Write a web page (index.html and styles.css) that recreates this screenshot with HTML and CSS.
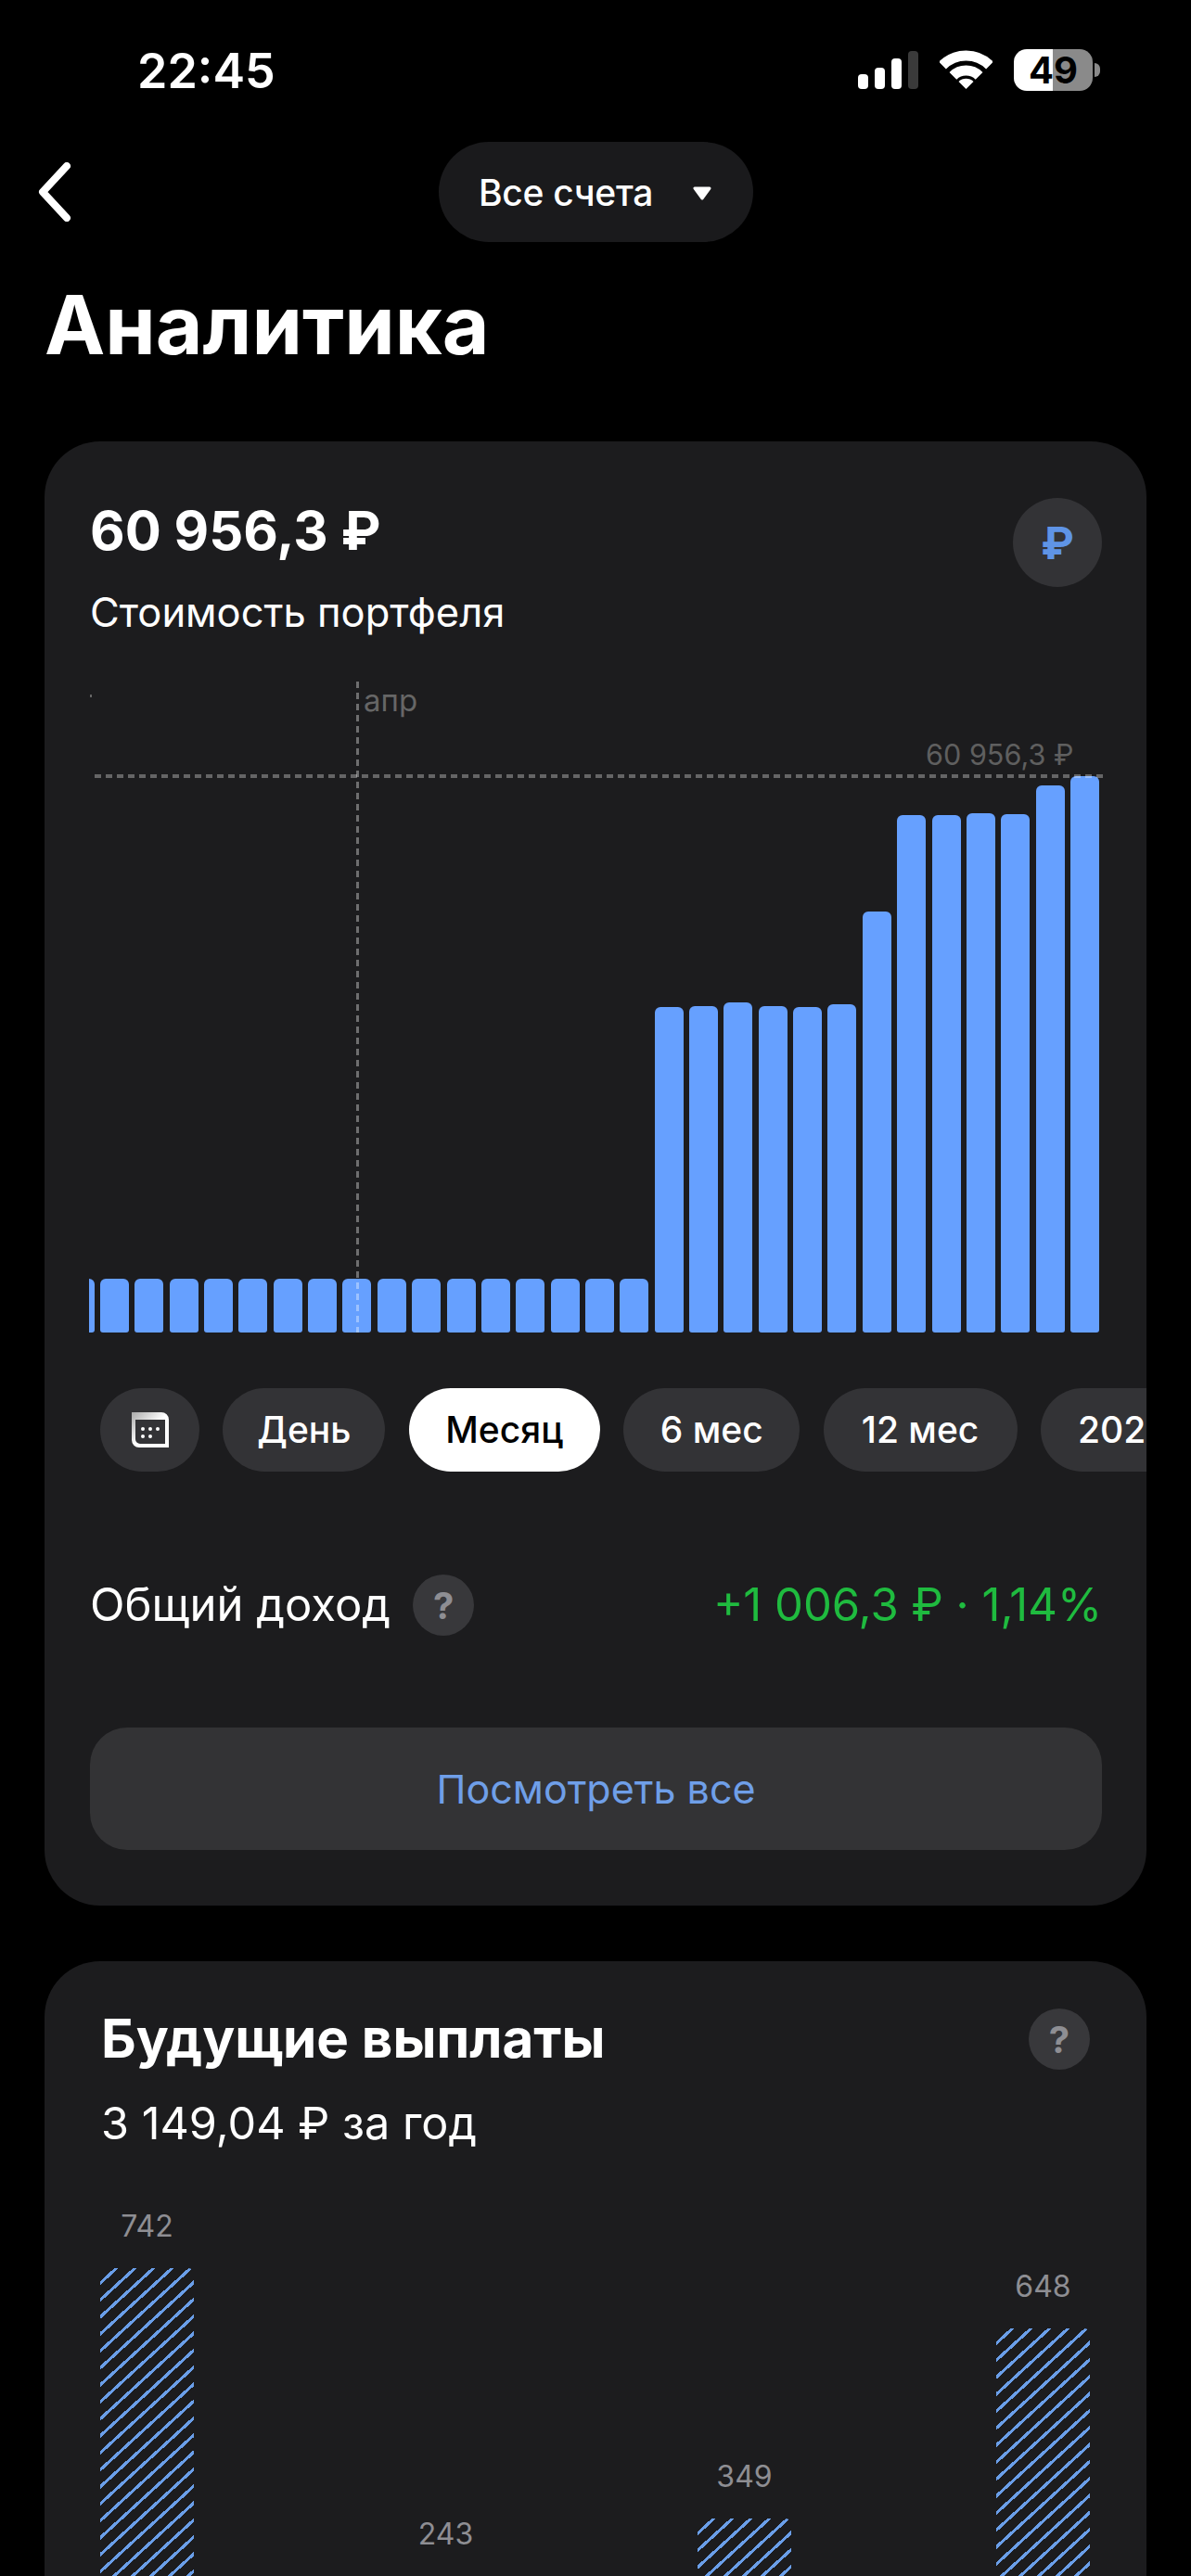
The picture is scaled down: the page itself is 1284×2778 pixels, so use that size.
FILE: index.html
```html
<!DOCTYPE html>
<html lang="ru">
<head>
<meta charset="utf-8">
<title>Аналитика</title>
<link rel="stylesheet" href="styles.css">
</head>
<body>
<div class="screen">
  <header class="status">
    <span class="time">22:45</span>
    <div class="status-icons">
      <div class="signal">
        <i class="sig s1"></i><i class="sig s2"></i><i class="sig s3"></i><i class="sig s4"></i>
      </div>
      <svg class="wifi" width="57" height="42" viewBox="0 0 57 42">
        <path d="M3 16.5A36 36 0 0 1 54 16.5" fill="none" stroke="#fff" stroke-width="11"/>
        <path d="M14.4 27.9A20 20 0 0 1 42.6 27.9" fill="none" stroke="#fff" stroke-width="11"/>
        <path d="M28.5 42L20.5 34A11.3 11.3 0 0 1 36.5 34Z" fill="#fff"/>
      </svg>
      <div class="battery">
        <div class="battery-body"><span class="battery-text">49</span></div>
        <i class="battery-nub"></i>
      </div>
    </div>
  </header>

  <nav class="nav">
    <svg class="back" width="38" height="64" viewBox="0 0 38 64">
      <path d="M32 4L6 32L32 60" fill="none" stroke="#fff" stroke-width="8" stroke-linecap="round" stroke-linejoin="round"/>
    </svg>
    <div class="account-pill">
      <span>Все счета</span>
      <svg width="20" height="15" viewBox="0 0 20 15"><path d="M2 2H18L10 13Z" fill="#fff" stroke="#fff" stroke-width="3" stroke-linejoin="round"/></svg>
    </div>
  </nav>

  <h1 class="title">Аналитика</h1>

  <section class="card card-portfolio">
    <div class="portfolio-head">
      <div>
        <div class="amount">60 956,3 ₽</div>
        <div class="amount-label">Стоимость портфеля</div>
      </div>
      <div class="currency">₽</div>
    </div>

    <div class="chart">
      <div class="bars" id="bars">
        <i class="bar" style="height:58px"></i>
        <i class="bar" style="height:58px"></i><i class="bar" style="height:58px"></i><i class="bar" style="height:58px"></i><i class="bar" style="height:58px"></i>
        <i class="bar" style="height:58px"></i><i class="bar" style="height:58px"></i><i class="bar" style="height:58px"></i><i class="bar" style="height:58px"></i>
        <i class="bar" style="height:58px"></i><i class="bar" style="height:58px"></i><i class="bar" style="height:58px"></i><i class="bar" style="height:58px"></i>
        <i class="bar" style="height:58px"></i><i class="bar" style="height:58px"></i><i class="bar" style="height:58px"></i><i class="bar" style="height:58px"></i>
        <i class="bar" style="height:351px"></i><i class="bar" style="height:352px"></i><i class="bar" style="height:356px"></i><i class="bar" style="height:352px"></i><i class="bar" style="height:351px"></i><i class="bar" style="height:354px"></i>
        <i class="bar" style="height:454px"></i>
        <i class="bar" style="height:558px"></i><i class="bar" style="height:558px"></i><i class="bar" style="height:560px"></i><i class="bar" style="height:559px"></i>
        <i class="bar" style="height:590px"></i><i class="bar" style="height:600px"></i>
      </div>
      <i class="tick"></i>
      <i class="vline"></i>
      <i class="hline"></i>
      <span class="month">апр</span>
      <span class="max-value">60 956,3 ₽</span>
    </div>

    <div class="periods">
      <div class="chip chip-icon">
        <svg width="40" height="38" viewBox="0 0 40 38">
          <defs>
            <linearGradient id="calGrad" x1="0" y1="0" x2="1" y2="1">
              <stop offset="0" stop-color="#a9a9a9"/>
              <stop offset="0.5" stop-color="#ffffff"/>
            </linearGradient>
          </defs>
          <path fill-rule="evenodd" d="M0 0H32A8 8 0 0 1 40 8V38H8A8 8 0 0 1 0 30ZM4 8V29A5 5 0 0 0 9 34H36V8Z" fill="url(#calGrad)"/>
          <circle cx="12" cy="18" r="2" fill="#fff"/><circle cx="20" cy="18" r="2" fill="#fff"/><circle cx="28" cy="18" r="2" fill="#fff"/>
          <circle cx="12" cy="26" r="2" fill="#fff"/><circle cx="20" cy="26" r="2" fill="#fff"/>
        </svg>
      </div>
      <div class="chip chip-day">День</div>
      <div class="chip chip-month chip-active">Месяц</div>
      <div class="chip chip-six">6 мес</div>
      <div class="chip chip-twelve">12 мес</div>
      <div class="chip chip-year">2025</div>
    </div>

    <div class="income">
      <div class="income-left">
        <span class="income-label">Общий доход</span>
        <span class="help">?</span>
      </div>
      <span class="income-value">+1 006,3 ₽ · 1,14%</span>
    </div>

    <div class="see-all">Посмотреть все</div>
  </section>

  <section class="card card-payouts">
    <div class="payouts-head">
      <h2 class="payouts-title">Будущие выплаты</h2>
      <span class="help">?</span>
    </div>
    <div class="payouts-sub">3 149,04 ₽ за год</div>
    <div class="payout-chart">
      <div class="payout-col"><span class="payout-label">742</span><div class="payout-bar" style="height:510px"></div></div>
      <div class="payout-col"><span class="payout-label">243</span><div class="payout-bar" style="height:178px"></div></div>
      <div class="payout-col"><span class="payout-label">349</span><div class="payout-bar" style="height:240px"></div></div>
      <div class="payout-col"><span class="payout-label">648</span><div class="payout-bar" style="height:445px"></div></div>
    </div>
  </section>
</div>
</body>
</html>
```
FILE: styles.css
```css
* { box-sizing: border-box; }
html, body { margin: 0; padding: 0; background: #000; }
body { width: 1284px; height: 2778px; overflow: hidden; font-family: Inter, "Liberation Sans", sans-serif; color: #fff; }
.screen { width: 1284px; height: 2778px; overflow: hidden; }

/* status bar */
.status { height: 153px; padding: 51px 98px 0 148px; display: flex; justify-content: space-between; align-items: flex-start; }
.time { font-size: 52px; font-weight: 600; line-height: 52px; }
.status-icons { display: flex; align-items: flex-start; padding-top: 2px; }
.signal { display: flex; align-items: flex-end; gap: 7px; height: 41px; margin-top: 2px; }
.sig { display: block; width: 11px; border-radius: 4px; background: #fff; }
.s1 { height: 16px; } .s2 { height: 23px; } .s3 { height: 33px; } .s4 { height: 41px; background: #3a3a3a; }
.wifi { display: block; margin-left: 23px; margin-top: 1px; }
.battery { display: flex; align-items: center; margin-left: 23px; }
.battery-body { width: 85px; height: 45px; border-radius: 14px; display: flex; align-items: center; justify-content: center; background: linear-gradient(90deg, #fff 0 42px, #8a8a8a 42px 100%); }
.battery-text { font-size: 40px; line-height: 45px; font-weight: 700; color: #000; }
.battery-nub { display: block; width: 6px; height: 15px; margin-left: 2px; border-radius: 0 8px 8px 0; background: #8a8a8a; }

/* nav */
.nav { position: relative; height: 108px; display: flex; justify-content: center; }
.back { position: absolute; left: 40px; top: 22px; }
.account-pill { width: 339px; height: 108px; margin-left: 1px; border-radius: 54px; background: #1a1a1c; display: flex; align-items: center; padding-left: 43px; gap: 43px; font-size: 39px; font-weight: 500; letter-spacing: -0.3px; }
.account-pill svg { margin-top: 2px; }

.title { margin: 37px 0 0 48px; font-size: 87.5px; line-height: 104px; font-weight: 700; height: 178px; }

/* cards */
.card { margin: 0 48px; width: 1188px; background: #1c1c1e; border-radius: 60px; }
.card-portfolio { height: 1579px; padding: 61px 48px 0 49px; overflow: hidden; }
.portfolio-head { display: flex; justify-content: space-between; align-items: flex-start; height: 198px; }
.amount { font-size: 58px; line-height: 68px; font-weight: 700; margin-top: 1px; }
.amount-label { font-size: 43.5px; line-height: 54px; margin-top: 27px; }
.currency { width: 96px; height: 96px; border-radius: 50%; background: #333336; color: #5f94e6; display: flex; align-items: center; justify-content: center; font-size: 48px; font-weight: 700; }

.chart { position: relative; height: 702px; }
.bars { position: absolute; left: -1px; right: 3px; bottom: 0; top: 0; overflow: hidden; display: flex; justify-content: flex-end; align-items: flex-end; gap: 6.36px; }
.bar { display: block; flex: 0 0 31px; background: #66a0ff; border-radius: 6px 6px 3px 3px; }
.tick { position: absolute; left: 0; top: 14px; width: 2px; height: 3px; background: #666; }
.vline { position: absolute; left: 287px; top: 0; bottom: 0; width: 3px; background: repeating-linear-gradient(180deg, rgba(255,255,255,.36) 0 7px, transparent 7px 12px); }
.hline { position: absolute; left: 5px; right: -4px; top: 100px; height: 4px; background: repeating-linear-gradient(90deg, rgba(255,255,255,.32) 0 7px, transparent 7px 12px); }
.month { position: absolute; left: 295px; top: 0; font-size: 33px; line-height: 40px; color: #666; }
.max-value { position: absolute; left: 901px; top: 59px; font-size: 30.6px; line-height: 40px; color: #5f5f5f; }

.periods { margin: 60px -48px 0 11px; display: flex; gap: 25.4px; overflow: hidden; }
.chip { flex: 0 0 auto; height: 90px; padding: 0 40px; border-radius: 45px; background: #333336; font-size: 39px; font-weight: 500; line-height: 90px; text-align: center; }
.chip-icon { width: 107px; padding: 0; display: flex; align-items: center; justify-content: center; }
.chip-day { width: 175px; padding: 0; }
.chip-month { width: 206px; padding: 0; }
.chip-six { width: 190px; padding: 0; }
.chip-twelve { width: 209px; padding: 0; }
.chip-active { background: #fff; color: #000; }

.income { margin-top: 111px; height: 66px; display: flex; justify-content: space-between; align-items: center; }
.income-left { display: flex; align-items: center; gap: 24px; }
.income-label { font-size: 49px; line-height: 66px; }
.help { width: 66px; height: 66px; border-radius: 50%; background: #38383b; color: #8e8e93; display: flex; align-items: center; justify-content: center; font-size: 40px; font-weight: 700; }
.income-value { font-size: 49px; line-height: 66px; color: #1fbb3f; }

.see-all { margin-top: 99px; height: 132px; border-radius: 40px; background: #333335; color: #6f9fe8; display: flex; align-items: center; justify-content: center; font-size: 43px; }

.card-payouts { margin-top: 60px; height: 900px; padding: 51px 61px 0 61px; }
.payouts-head { display: flex; justify-content: space-between; align-items: center; height: 66px; }
.payouts-title { margin: -2px 0 0; font-size: 58.3px; line-height: 66px; font-weight: 700; }
.payouts-sub { font-size: 48.6px; line-height: 60px; margin-top: 28px; }
.payout-chart { height: 636px; display: flex; justify-content: space-between; align-items: flex-end; margin-left: -1px; }
.payout-col { width: 101px; display: flex; flex-direction: column; align-items: center; gap: 23px; }
.payout-label { font-size: 32px; line-height: 44px; color: #8e8e93; }
.payout-bar { width: 101px; border-radius: 6px 6px 0 0; background: repeating-linear-gradient(137.5deg, transparent 0 10.3px, #6a9ee8 10.3px 13.5px); }
```
